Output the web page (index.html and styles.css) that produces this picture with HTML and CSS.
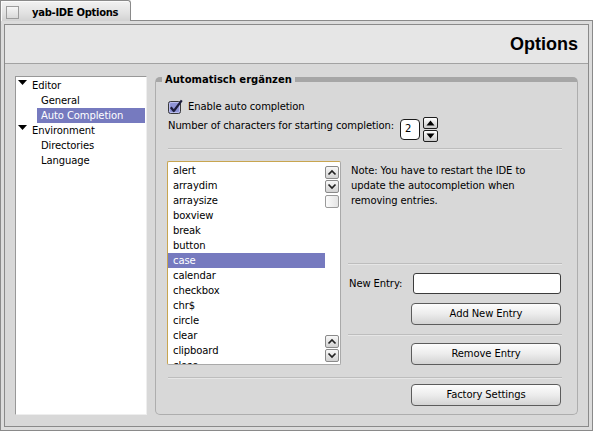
FILE: index.html
```html
<!DOCTYPE html>
<html lang="de">
<head>
    <meta charset="UTF-8">
    <meta name="viewport" content="width=device-width, initial-scale=1.0">
    <title>yab-IDE Options</title>
    <link rel="stylesheet" href="styles.css">
</head>
<body>
    <div class="window">
        <!-- Fenster-Tab -->
        <div class="tab">
            <span class="close-box"></span>
            <span class="tab-title">yab-IDE Options</span>
        </div>

        <div class="frame">
            <div class="content">
                <div class="header">
                    <h1>Options</h1>
                </div>

                <div class="main">
                    <!-- Baum mit den Kategorien -->
                    <ul class="tree">
                        <li class="tree-item parent">
                            <svg class="expander" width="9" height="5" viewBox="0 0 9 5"><path d="M0 0 H9 L4.5 5 Z" fill="#000"/></svg>
                            Editor
                        </li>
                        <li class="tree-item child">General</li>
                        <li class="tree-item child selected">Auto Completion</li>
                        <li class="tree-item parent">
                            <svg class="expander" width="9" height="5" viewBox="0 0 9 5"><path d="M0 0 H9 L4.5 5 Z" fill="#000"/></svg>
                            Environment
                        </li>
                        <li class="tree-item child">Directories</li>
                        <li class="tree-item child">Language</li>
                    </ul>

                    <!-- Auto Completion -->
                    <div class="box">
                        <span class="box-label">Automatisch ergänzen</span>

                        <label class="check-row">
                            <svg class="checkbox" width="15" height="15" viewBox="0 0 15 15">
                                <rect x="0.5" y="2.5" width="12" height="12" rx="2" fill="#8f94d6" stroke="#3a3a3a"/>
                                <rect x="1.5" y="3.5" width="10" height="10" rx="1.5" fill="none" stroke="#b9bcec"/>
                                <path d="M2.8 8.2 L5.8 12 L13.8 1.4" fill="none" stroke="#1c1c3a" stroke-width="2.2" stroke-linejoin="round"/>
                            </svg>
                            Enable auto completion
                        </label>

                        <div class="number-row">
                            <span class="number-label">Number of characters for starting completion:</span>
                            <span class="number-field">2</span>
                            <span class="spinner">
                                <span class="spin-btn"><svg width="9" height="6" viewBox="0 0 9 6"><path d="M0.5 5.5 L4.5 0.5 L8.5 5.5 Z" fill="#000"/></svg></span>
                                <span class="spin-btn"><svg width="9" height="6" viewBox="0 0 9 6"><path d="M0.5 0.5 L4.5 5.5 L8.5 0.5 Z" fill="#000"/></svg></span>
                            </span>
                        </div>

                        <div class="separator"></div>

                        <div class="list-section">
                            <div class="listbox">
                                <ul class="list">
                                    <li>alert</li>
                                    <li>arraydim</li>
                                    <li>arraysize</li>
                                    <li>boxview</li>
                                    <li>break</li>
                                    <li>button</li>
                                    <li class="selected">case</li>
                                    <li>calendar</li>
                                    <li>checkbox</li>
                                    <li>chr$</li>
                                    <li>circle</li>
                                    <li>clear</li>
                                    <li>clipboard</li>
                                    <li>close</li>
                                </ul>
                                <div class="scrollbar">
                                    <span class="scroll-btn"><svg width="10" height="7" viewBox="0 0 10 7"><path d="M1.5 5.5 L5 2 L8.5 5.5" fill="none" stroke="#222" stroke-width="1.7"/></svg></span>
                                    <span class="scroll-btn"><svg width="10" height="7" viewBox="0 0 10 7"><path d="M1.5 1.5 L5 5 L8.5 1.5" fill="none" stroke="#222" stroke-width="1.7"/></svg></span>
                                    <span class="thumb"></span>
                                    <span class="scroll-btn bottom-pair"><svg width="10" height="7" viewBox="0 0 10 7"><path d="M1.5 5.5 L5 2 L8.5 5.5" fill="none" stroke="#222" stroke-width="1.7"/></svg></span>
                                    <span class="scroll-btn"><svg width="10" height="7" viewBox="0 0 10 7"><path d="M1.5 1.5 L5 5 L8.5 1.5" fill="none" stroke="#222" stroke-width="1.7"/></svg></span>
                                </div>
                            </div>

                            <div class="side">
                                <p class="note">Note: You have to restart the IDE to<br>update the autocompletion when<br>removing entries.</p>
                                <div class="separator push"></div>
                                <div class="entry-row">
                                    <span>New Entry:</span>
                                    <span class="text-input"></span>
                                </div>
                                <button class="btn add-btn">Add New Entry</button>
                                <div class="separator mid"></div>
                                <button class="btn remove-btn">Remove Entry</button>
                            </div>
                        </div>

                        <div class="separator bottom"></div>
                        <button class="btn factory-btn">Factory Settings</button>
                    </div>
                </div>
            </div>
        </div>
    </div>
</body>
</html>
```

FILE: styles.css
```css
/* Reset */
* {
    margin: 0;
    padding: 0;
    box-sizing: border-box;
}

body {
    width: 593px;
    height: 431px;
    overflow: hidden;
    background-color: #fff;
    color: #000;
    font-family: 'DejaVu Sans', sans-serif;
    font-size: 10px;
    letter-spacing: -0.1px;
}

.window {
    width: 593px;
    height: 431px;
    display: flex;
    flex-direction: column;
}

/* Tab */
.tab {
    position: relative;
    z-index: 1;
    width: 131px;
    height: 21px;
    margin-bottom: -1px;
    padding: 5px 0 0 5px;
    display: flex;
    align-items: flex-start;
    border: 1px solid #8a8a8a;
    border-bottom: none;
    border-top-right-radius: 3px;
    background: linear-gradient(#f2f2f2, #e2e2e2 60%, #d2d2d2);
    box-shadow: inset 1px 1px 0 #fbfbfb;
}

.close-box {
    width: 13px;
    height: 13px;
    border: 1px solid #9c9c9c;
    background: linear-gradient(#f6f6f6, #d9d9d9);
}

.tab-title {
    margin-left: 13px;
    font-weight: bold;
    line-height: 13px;
    letter-spacing: -0.3px;
}

.frame {
    flex: 1;
    border: 1px solid #8a8a8a;
    background-color: #dcdcdc;
    padding: 3px;
}

.content {
    height: 100%;
    border: 1px solid #8a8a8a;
    background-color: #d8d8d8;
    display: flex;
    flex-direction: column;
}

.header {
    height: 39px;
    flex-shrink: 0;
    background-color: #e6e6e6;
    border-bottom: 1px solid #a2a2a2;
    display: flex;
    align-items: center;
    justify-content: flex-end;
    padding-right: 10px;
}

.header h1 {
    font-family: 'Liberation Sans', Arial, sans-serif;
    font-size: 18px;
    font-weight: bold;
    letter-spacing: 0;
}

.main {
    flex: 1;
    display: flex;
    gap: 8px;
    padding: 12px 10px 11px;
}

/* Baum */
.tree {
    width: 132px;
    padding-top: 1px;
    list-style: none;
    background-color: #fff;
    border: 1px solid;
    border-color: #989898 #eeeeee #eeeeee #989898;
}

.tree-item {
    height: 15px;
    line-height: 15px;
    display: flex;
    align-items: center;
    white-space: nowrap;
}

.tree-item.parent {
    padding-left: 2px;
}

.expander {
    align-self: flex-start;
    margin: 2px 5px 0 0;
}

.tree-item.child {
    margin: 0 1px 0 21px;
    padding-left: 4px;
}

.selected {
    background-color: #767abf;
    color: #fff;
}

/* Box */
.box {
    flex: 1;
    position: relative;
    margin-top: 1px;
    border: 1px solid #adadad;
    border-top: 5px solid #a6a6a6;
    border-radius: 5px;
    padding: 17px 15px 0 12px;
    display: flex;
    flex-direction: column;
}

.box-label {
    position: absolute;
    top: -9px;
    left: 6px;
    padding: 0 3px;
    background-color: #d8d8d8;
    font-weight: bold;
    line-height: 13px;
    letter-spacing: 0;
}

.check-row {
    height: 15px;
    display: flex;
    align-items: center;
    gap: 5px;
}

.number-row {
    height: 26px;
    margin-top: 3px;
    display: flex;
    align-items: flex-start;
}

.number-label {
    width: 232px;
    padding-top: 2px;
    line-height: 13px;
    white-space: nowrap;
}

.number-field {
    width: 20px;
    height: 21px;
    margin-top: 2px;
    padding-left: 4px;
    border: 1px solid #1a1a1a;
    border-radius: 4px;
    background-color: #fff;
    line-height: 17px;
}

.spinner {
    margin-left: 3px;
    display: flex;
    flex-direction: column;
    gap: 1px;
}

.spin-btn {
    width: 15px;
    height: 12px;
    border: 1px solid #1e1e1e;
    border-radius: 2px;
    background: linear-gradient(#ffffff, #c9c9c9);
    display: flex;
    align-items: center;
    justify-content: center;
}

.separator {
    height: 2px;
    margin-top: 5px;
    border-top: 1px solid #bdbdbd;
    border-bottom: 1px solid #e6e6e6;
}

/* Liste */
.list-section {
    height: 204px;
    margin-top: 11px;
    display: flex;
    gap: 7px;
}

.listbox {
    width: 174px;
    margin-left: -1px;
    border: 1px solid;
    border-color: #c8a550 #a9a9a9 #a9a9a9 #c8a550;
    border-radius: 2px;
    background-color: #fff;
    display: flex;
}

.list {
    flex: 1;
    padding-top: 1px;
    list-style: none;
    overflow: hidden;
}

.list li {
    height: 15px;
    line-height: 15px;
    padding-left: 5px;
    white-space: nowrap;
}

.scrollbar {
    width: 15px;
    padding: 4px 1px 1px 0;
    display: flex;
    flex-direction: column;
}

.scroll-btn {
    width: 14px;
    height: 13px;
    margin-bottom: 1px;
    border: 1px solid #8a8a8a;
    border-radius: 2px;
    background: linear-gradient(#f8f8f8, #d2d2d2);
    display: flex;
    align-items: center;
    justify-content: center;
}

.thumb {
    width: 14px;
    height: 13px;
    margin-top: 1px;
    border: 1px solid #9a9a9a;
    border-radius: 2px;
    background: linear-gradient(90deg, #fbfbfb, #e4e4e4);
}

.scroll-btn.bottom-pair {
    margin-top: auto;
}

.side {
    flex: 1;
    padding-top: 2px;
    display: flex;
    flex-direction: column;
}

.note {
    line-height: 15px;
    padding-left: 3px;
    white-space: nowrap;
}

.separator.push {
    margin-top: auto;
}

.entry-row {
    height: 21px;
    margin-top: 8px;
    padding-left: 1px;
    display: flex;
    align-items: center;
}

.text-input {
    width: 148px;
    height: 21px;
    margin: 0 1px 0 auto;
    border: 1px solid #3c3c3c;
    border-radius: 3px;
    background-color: #fff;
}

.btn {
    align-self: flex-end;
    width: 150px;
    height: 22px;
    margin-right: 1px;
    border: 1px solid #5c5c5c;
    border-radius: 4px;
    background: linear-gradient(#fdfdfd, #ececec 50%, #d3d3d3);
    font-family: inherit;
    font-size: 10px;
    letter-spacing: -0.1px;
    color: #000;
    line-height: 20px;
}

.add-btn {
    margin-top: 9px;
}

.separator.mid {
    margin-top: 9px;
}

.remove-btn {
    margin-top: 7px;
}

.separator.bottom {
    margin-top: 12px;
}

.factory-btn {
    margin-top: 5px;
}
```
